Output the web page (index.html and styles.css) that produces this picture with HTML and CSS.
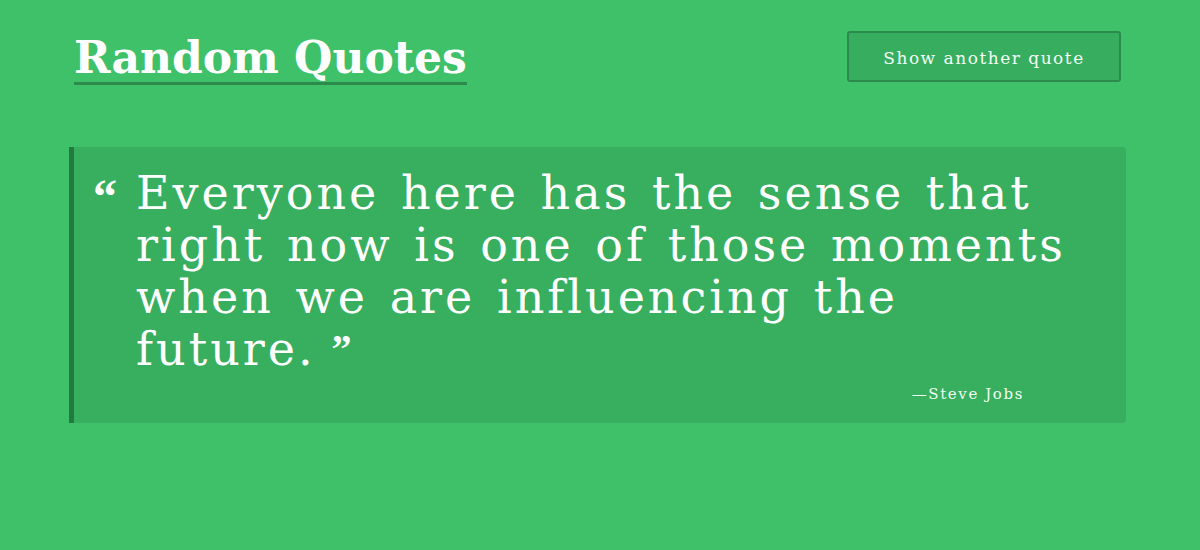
FILE: index.html
```html
<!DOCTYPE html>
<html>
<head>
<meta charset="utf-8">
<link rel="stylesheet" href="styles.css">
</head>
<body>
<div class="page">
  <header class="header">
    <h1 class="title">Random Quotes</h1>
    <button class="btn">Show another quote</button>
  </header>
  <blockquote class="card">
    <div class="quote-row">
      <span class="open-mark">&ldquo;</span>
      <p class="quote-text">Everyone here has the sense that right now is one of those moments when we are influencing the future.<span class="close-mark">&rdquo;</span></p>
    </div>
    <div class="author">&mdash;Steve Jobs</div>
  </blockquote>
</div>
</body>
</html>
```

FILE: styles.css
```css
html, body {
  margin: 0;
  padding: 0;
}
body {
  background: #3fc16a;
  font-family: "DejaVu Serif", "Liberation Serif", serif;
  color: #fff;
  height: 550px;
  overflow: hidden;
}
.page {
  width: 1057px;
  margin: 0 0 0 69px;
}
.header {
  display: flex;
  justify-content: space-between;
  align-items: flex-start;
  padding: 0 5px;
  height: 147px;
}
.title {
  margin: 34px 0 0 0;
  font-size: 44px;
  font-weight: bold;
  line-height: 48px;
  border-bottom: 3px solid #2b8a4c;
  padding-bottom: 0;
}
.btn {
  margin-top: 31px;
  width: 274px;
  height: 51px;
  background: #37ad5f;
  border: 2px solid #2b8a4c;
  border-radius: 3px;
  color: #f2fff6;
  font-family: "DejaVu Serif", "Liberation Serif", serif;
  font-size: 17px;
  letter-spacing: 1.5px;
  padding: 3px 0 0 0;
}
.card {
  margin: 0;
  background: #38ae5f;
  border-left: 5px solid #227a40;
  border-radius: 0 4px 4px 0;
  height: 276px;
  box-sizing: border-box;
  padding: 20px 20px 0 21px;
}
.quote-row {
  display: flex;
  align-items: flex-start;
}
.open-mark {
  font-family: "Liberation Serif", serif;
  font-size: 48px;
  font-weight: bold;
  line-height: 40px;
  width: 41px;
  flex: none;
  margin-top: 10px;
  margin-left: -2px;
  margin-right: 2px;
}
.quote-text {
  margin: 0;
  font-size: 46px;
  line-height: 52px;
  letter-spacing: 3px;
  word-spacing: 4px;
  max-width: 960px;
}
.close-mark {
  font-family: "Liberation Serif", serif;
  font-size: 40px;
  font-weight: bold;
  line-height: 1;
  letter-spacing: 0;
  margin-left: 16px;
  vertical-align: 3px;
}
.author {
  text-align: right;
  padding-right: 82px;
  margin-top: 10px;
  font-size: 15px;
  letter-spacing: 1.6px;
  color: #f0fff4;
}
```
